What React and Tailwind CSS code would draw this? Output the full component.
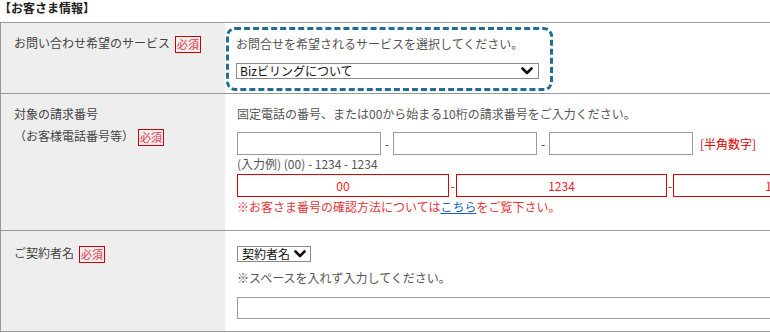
const font = { fontFamily: '"Noto Sans CJK JP", "Noto Sans", sans-serif' };

function Badge({ className = "" }) {
  return (
    <span
      className={`inline-flex h-[17px] items-center border border-[#cc0000] px-[1px] align-middle text-[11px] leading-none text-[#e8334a] ${className}`}
    >
      必須
    </span>
  );
}

function Chevron() {
  return (
    <svg width="12" height="8" viewBox="0 0 12 8" className="shrink-0">
      <polyline
        points="1.5,1.5 6,6 10.5,1.5"
        fill="none"
        stroke="#111"
        strokeWidth="2.6"
        strokeLinecap="round"
        strokeLinejoin="round"
      />
    </svg>
  );
}

function Dash() {
  return <span className="w-[12px] text-center text-[12px] text-[#444]">-</span>;
}

export default function App() {
  return (
    <div
      className="h-[333px] w-[770px] overflow-hidden bg-white text-[12px] text-[#444]"
      style={font}
    >
      <div className="-ml-[1px] h-[22px] pt-[1px] text-[12px] font-bold leading-[14px] text-[#222]">
        【お客さま情報】
      </div>

      <div className="w-[1000px] border-l border-t border-[#9a9a9a]">
        {/* row 1 */}
        <div className="grid grid-cols-[224px_1fr] border-b border-[#9a9a9a]">
          <div className="bg-[#eeeeee] pl-[13px] pt-[11px] leading-[18px]">
            お問い合わせ希望のサービス
            <Badge className="ml-[5px]" />
          </div>
          <div className="pb-[2px] pl-[1px] pt-[4px]">
            <div className="w-[327px] rounded-[9px] border-[3px] border-dashed border-[#206e98] pb-[9px] pl-[7px] pt-[5px]">
              <div className="leading-[18px] text-[#555]">
                お問合せを希望されるサービスを選択してください。
              </div>
              <div className="mt-[10px] flex h-[16px] w-[303px] items-center justify-between border border-[#8a8a8a] pl-[3px] pr-[5px] text-[12px] leading-none text-[#111]">
                <span>Bizビリングについて</span>
                <Chevron />
              </div>
            </div>
          </div>
        </div>

        {/* row 2 */}
        <div className="grid grid-cols-[224px_1fr] border-b border-[#9a9a9a]">
          <div className="bg-[#eeeeee] pl-[13px] pt-[9px] leading-[22px]">
            <div>対象の請求番号</div>
            <div>
              （お客様電話番号等）
              <Badge className="ml-[4px]" />
            </div>
          </div>
          <div className="pb-[13px] pl-[12px] pt-[11px]">
            <div className="leading-[18px] text-[#555]">
              固定電話の番号、または00から始まる10桁の請求番号をご入力ください。
            </div>
            <div className="mt-[9px] flex items-center">
              <div className="h-[23px] w-[144px] border border-[#9a9a9a]" />
              <Dash />
              <div className="h-[23px] w-[144px] border border-[#9a9a9a]" />
              <Dash />
              <div className="h-[23px] w-[144px] border border-[#9a9a9a]" />
              <span className="ml-[7px] text-[#e00000]">[半角数字]</span>
            </div>
            <div className="leading-[18px] text-[#555]">
              (入力例) (00) - 1234 - 1234
            </div>
            <div className="mt-[1px] flex items-center">
              <div className="flex h-[23px] w-[212px] items-center justify-center border border-[#e00000] text-[#ee2222]">
                00
              </div>
              <span className="w-[7px] text-center text-[#444]">-</span>
              <div className="flex h-[23px] w-[211px] items-center justify-center border border-[#e00000] text-[#ee2222]">
                1234
              </div>
              <span className="w-[6px] text-center text-[#444]">-</span>
              <div className="flex h-[23px] w-[211px] items-center justify-center border border-[#e00000] text-[#ee2222]">
                1234
              </div>
            </div>
            <div className="leading-[20px] text-[#e8333a]">
              ※お客さま番号の確認方法については
              <span className="text-[#1a5fc8] underline">こちら</span>
              をご覧下さい。
            </div>
          </div>
        </div>

        {/* row 3 */}
        <div className="grid grid-cols-[224px_1fr] border-b border-[#9a9a9a]">
          <div className="bg-[#eeeeee] pl-[13px] pt-[13px] leading-[18px]">
            ご契約者名
            <Badge className="ml-[5px]" />
          </div>
          <div className="pb-[12px] pl-[12px] pt-[15px]">
            <div className="flex h-[16px] w-[74px] items-center gap-[4px] border border-[#8a8a8a] pl-[4px] text-[12px] leading-none text-[#111]">
              <span>契約者名</span>
              <Chevron />
            </div>
            <div className="mt-[7px] leading-[18px] text-[#555]">
              ※スペースを入れず入力してください。
            </div>
            <div className="mt-[10px] h-[22px] w-[700px] border border-[#9a9a9a]" />
          </div>
        </div>
      </div>
    </div>
  );
}
